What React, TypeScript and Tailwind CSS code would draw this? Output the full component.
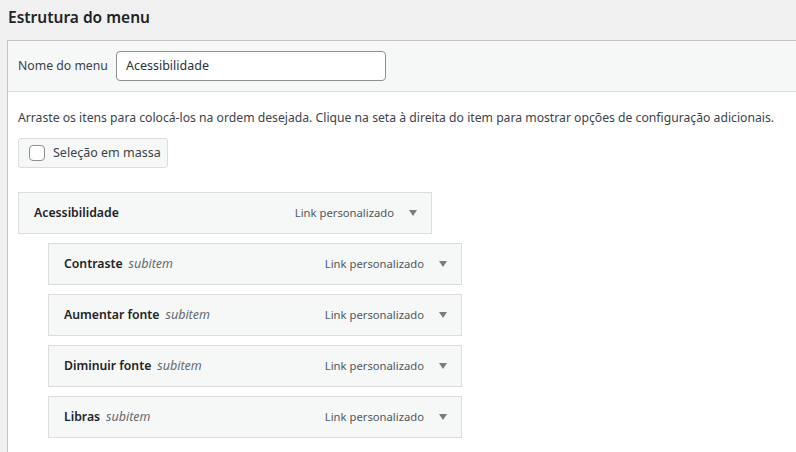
import React from "react";

const font = { fontFamily: '"Noto Sans", "Open Sans", sans-serif' };

function Arrow() {
  return (
    <svg width="10" height="8" viewBox="0 0 10 8" className="shrink-0">
      <path d="M1 1 L9 1 L5 7 Z" fill="#787c82" />
    </svg>
  );
}

function Item({ title, sub }: { title: string; sub?: boolean }) {
  return (
    <div className="flex h-[42px] w-[414px] items-center border border-[#dcdcde] bg-[#f6f7f7] pl-[15px] pr-[13px]">
      <span className="text-[12.25px] font-semibold text-[#1d2327]">{title}</span>
      {sub && <span className="ml-[6px] text-[12.5px] italic text-[#646970]">subitem</span>}
      <span className="ml-auto text-[11.25px] text-[#50575e]">Link personalizado</span>
      <span className="ml-[14px]"><Arrow /></span>
    </div>
  );
}

export default function App() {
  return (
    <div className="h-[452px] w-[796px] overflow-hidden bg-[#f0f0f1] text-[#3c434a]" style={font}>
      <h2 className="pl-[8px] pt-[1px] text-[15.5px] font-semibold leading-[32px] text-[#1d2327]">Estrutura do menu</h2>
      <div className="ml-[7px] mt-[7px] border-l border-t border-[#c3c4c7] bg-white">
        <div className="flex h-[51px] items-center border-b border-[#dcdcde] bg-[#f6f7f7] pl-[10px]">
          <span className="text-[12.25px] text-[#3c434a]">Nome do menu</span>
          <div className="ml-[8px] flex h-[30px] w-[270px] items-center rounded-[4px] border border-[#8c8f94] bg-white pl-[9px] text-[12.5px] text-[#2c3338]">
            Acessibilidade
          </div>
        </div>
        <div className="pl-[10px] pt-[15px]">
          <p className="text-[12.2px] leading-[22px] text-[#3c434a]">
            Arraste os itens para colocá-los na ordem desejada. Clique na seta à direita do item para mostrar opções de configuração adicionais.
          </p>
          <div className="mt-[9px] flex h-[30px] w-[150px] items-center rounded-[3px] border border-[#dcdcde] bg-[#f6f7f7] pl-[10px]">
            <span className="h-[16px] w-[16px] rounded-[4px] border border-[#8c8f94] bg-white" />
            <span className="ml-[8px] text-[12.5px] text-[#3c434a]">Seleção em massa</span>
          </div>
          <div className="mt-[24px] flex flex-col gap-[9px] pb-[20px]">
            <Item title="Acessibilidade" />
            <div className="ml-[30px] flex flex-col gap-[9px]">
              <Item title="Contraste" sub />
              <Item title="Aumentar fonte" sub />
              <Item title="Diminuir fonte" sub />
              <Item title="Libras" sub />
            </div>
          </div>
        </div>
      </div>
    </div>
  );
}
